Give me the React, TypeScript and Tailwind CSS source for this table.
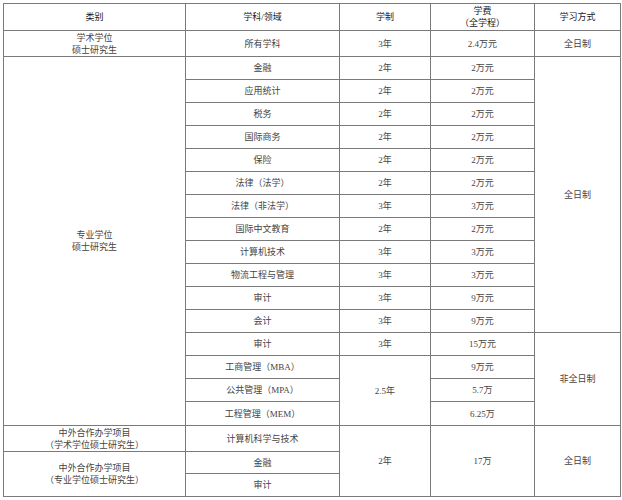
import React from 'react';

type Cell = {
    text: string[];
    col: string;
    row: string;
    head?: boolean;
};

const rows = [
    'row-start-1', 'row-start-2', 'row-start-3', 'row-start-4', 'row-start-5', 'row-start-6', 'row-start-7',
    'row-start-8', 'row-start-9', 'row-start-10', 'row-start-11', 'row-start-12', 'row-start-13', 'row-start-14',
    'row-start-15', 'row-start-16', 'row-start-17', 'row-start-18', 'row-start-19', 'row-start-20', 'row-start-21',
];

const majors: [string, string, string][] = [
    ['金融', '2年', '2万元'],
    ['应用统计', '2年', '2万元'],
    ['税务', '2年', '2万元'],
    ['国际商务', '2年', '2万元'],
    ['保险', '2年', '2万元'],
    ['法律（法学）', '2年', '2万元'],
    ['法律（非法学）', '3年', '3万元'],
    ['国际中文教育', '2年', '2万元'],
    ['计算机技术', '3年', '3万元'],
    ['物流工程与管理', '3年', '3万元'],
    ['审计', '3年', '9万元'],
    ['会计', '3年', '9万元'],
    ['审计', '3年', '15万元'],
    ['工商管理（MBA）', '', '9万元'],
    ['公共管理（MPA）', '', '5.7万'],
    ['工程管理（MEM）', '', '6.25万'],
];

const cells: Cell[] = [
    { text: ['类别'], col: 'col-start-1', row: 'row-start-1', head: true },
    { text: ['学科/领域'], col: 'col-start-2', row: 'row-start-1', head: true },
    { text: ['学制'], col: 'col-start-3', row: 'row-start-1', head: true },
    { text: ['学费', '（全学程）'], col: 'col-start-4', row: 'row-start-1', head: true },
    { text: ['学习方式'], col: 'col-start-5', row: 'row-start-1', head: true },

    { text: ['学术学位', '硕士研究生'], col: 'col-start-1', row: 'row-start-2' },
    { text: ['所有学科'], col: 'col-start-2', row: 'row-start-2' },
    { text: ['3年'], col: 'col-start-3', row: 'row-start-2' },
    { text: ['2.4万元'], col: 'col-start-4', row: 'row-start-2' },
    { text: ['全日制'], col: 'col-start-5', row: 'row-start-2' },

    { text: ['专业学位', '硕士研究生'], col: 'col-start-1', row: 'row-start-3 row-span-16' },
    ...majors.flatMap(([name, years, fee], i) => {
        const list: Cell[] = [
            { text: [name], col: 'col-start-2', row: rows[i + 2] },
            { text: [fee], col: 'col-start-4', row: rows[i + 2] },
        ];
        if (years) list.push({ text: [years], col: 'col-start-3', row: rows[i + 2] });
        return list;
    }),
    { text: ['2.5年'], col: 'col-start-3', row: 'row-start-16 row-span-3' },
    { text: ['全日制'], col: 'col-start-5', row: 'row-start-3 row-span-12' },
    { text: ['非全日制'], col: 'col-start-5', row: 'row-start-15 row-span-4' },

    { text: ['中外合作办学项目', '（学术学位硕士研究生）'], col: 'col-start-1', row: 'row-start-19' },
    { text: ['中外合作办学项目', '（专业学位硕士研究生）'], col: 'col-start-1', row: 'row-start-20 row-span-2' },
    { text: ['计算机科学与技术'], col: 'col-start-2', row: 'row-start-19' },
    { text: ['金融'], col: 'col-start-2', row: 'row-start-20' },
    { text: ['审计'], col: 'col-start-2', row: 'row-start-21' },
    { text: ['2年'], col: 'col-start-3', row: 'row-start-19 row-span-3' },
    { text: ['17万'], col: 'col-start-4', row: 'row-start-19 row-span-3' },
    { text: ['全日制'], col: 'col-start-5', row: 'row-start-19 row-span-3' },
];

const App: React.FC = () => {
    return (
        <div className="min-h-screen bg-white pt-[3px] pl-[3px] font-['Liberation_Serif','Noto_Sans_CJK_SC',serif]">
            <div className="grid w-fit gap-px border border-[#7a7a7a] bg-[#7a7a7a] grid-cols-[181px_153px_90px_103px_85px] grid-rows-[26px_25px_repeat(15,22px)_23px_25px_21px_22px]">
                {cells.map((c, i) => (
                    <div
                        key={i}
                        className={`${c.col} ${c.row} flex flex-col items-center justify-center bg-white text-center text-[9px] leading-[12px] ${c.head ? 'text-[#1a1a1a]' : 'text-[#444]'}`}
                    >
                        {c.text.map((t, j) => (
                            <span key={j}>{t}</span>
                        ))}
                    </div>
                ))}
            </div>
        </div>
    );
};

export default App;
